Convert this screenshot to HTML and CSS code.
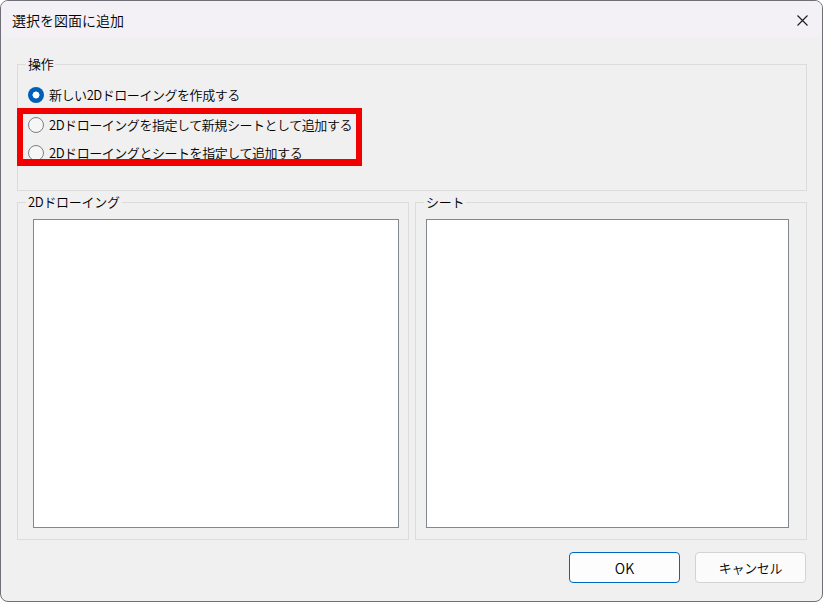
FILE: index.html
```html
<!DOCTYPE html>
<html lang="ja">
<head>
<meta charset="utf-8">
<title>選択を図面に追加</title>
<link rel="stylesheet" href="styles.css">
</head>
<body>
<div class="window">
  <div class="titlebar">
    <span class="title">選択を図面に追加</span>
    <span class="close">
      <svg width="11" height="11" viewBox="0 0 11 11"><path d="M0.5 0.5 L10.5 10.5 M10.5 0.5 L0.5 10.5" stroke="#1a1a1a" stroke-width="1.1" fill="none"/></svg>
    </span>
  </div>
  <div class="content">
    <div class="group group-op">
      <span class="group-label">操作</span>
      <div class="radio-row row1"><span class="radio checked"></span><span class="radio-text">新しい2Dドローイングを作成する</span></div>
      <div class="radio-row row2"><span class="radio"></span><span class="radio-text">2Dドローイングを指定して新規シートとして追加する</span></div>
      <div class="radio-row row3"><span class="radio"></span><span class="radio-text">2Dドローイングとシートを指定して追加する</span></div>
      <div class="highlight"></div>
    </div>
    <div class="lists">
      <div class="group group-left">
        <span class="group-label">2Dドローイング</span>
        <div class="listbox lb-left"></div>
      </div>
      <div class="group group-right">
        <span class="group-label">シート</span>
        <div class="listbox lb-right"></div>
      </div>
    </div>
    <div class="buttons">
      <button class="btn btn-ok">OK</button>
      <button class="btn btn-cancel">キャンセル</button>
    </div>
  </div>
</div>
</body>
</html>
```
FILE: styles.css
```css
* { box-sizing: border-box; }
html, body { margin: 0; padding: 0; background: #ffffff; }
body {
  font-family: "Noto Sans CJK JP", "Noto Sans", sans-serif;
  font-weight: 350;
  color: #000;
}
.window {
  width: 823px;
  height: 602px;
  border: 1px solid #6f6f77;
  border-radius: 8px;
  overflow: hidden;
  background: #f0f0f0;
  display: flex;
  flex-direction: column;
}
.titlebar {
  height: 36px;
  flex: none;
  background: #f3f1f6;
  display: flex;
  align-items: center;
  justify-content: space-between;
  padding-left: 11px;
  padding-right: 14px;
}
.title {
  font-size: 14px;
  line-height: 18px;
  margin-top: 2px;
}
.close { display: flex; margin-top: 2px; }
.content {
  padding: 27px 15px 0 16px;
}
.group {
  position: relative;
  border: 1px solid #dcdcdc;
}
.group-label {
  position: absolute;
  top: -9px;
  left: 8px;
  padding: 0 2px;
  background: #f0f0f0;
  font-size: 13px;
  line-height: 16px;
  letter-spacing: -0.3px;
}
.group-op {
  height: 127px;
  padding: 19px 0 0 10px;
}
.radio-row {
  display: flex;
  align-items: center;
  height: 22px;
}
.row1 { margin-bottom: 8px; }
.row2 { margin-bottom: 6px; }
.radio {
  width: 16px;
  height: 16px;
  border-radius: 50%;
  border: 1px solid #7f7f7f;
  background: #f6f6f6;
  flex: none;
  margin-right: 5px;
}
.radio.checked {
  border: none;
  background: radial-gradient(circle, #ffffff 0 3.2px, #005fb8 3.8px);
}
.radio-text {
  font-size: 13px;
  line-height: 18px;
  letter-spacing: -0.45px;
}
.highlight {
  position: absolute;
  left: -1px;
  top: 43px;
  width: 345px;
  height: 58px;
  border: 6px solid #f00000;
  border-bottom-width: 7px;
}
.lists {
  display: flex;
  gap: 6px;
  margin-top: 11px;
}
.group-left, .group-right {
  width: 392px;
  height: 338px;
  padding-top: 16px;
}
.group-left { padding-left: 15px; }
.group-right { padding-left: 10px; }
.listbox {
  height: 309px;
  background: #ffffff;
  border: 1px solid #828790;
}
.lb-left { width: 366px; }
.lb-right { width: 363px; }
.buttons {
  display: flex;
  justify-content: flex-end;
  gap: 15px;
  margin-top: 12px;
  padding-right: 1px;
}
.btn {
  width: 111px;
  height: 31px;
  border-radius: 4px;
  font-family: "Noto Sans CJK JP", "Noto Sans", sans-serif;
  font-weight: 350;
  font-size: 13px;
  color: #000;
  padding: 0;
}
.btn-ok {
  background: #fdfdfd;
  border: 1px solid #0067c0;
  font-size: 14px;
}
.btn-cancel {
  background: #fbfbfb;
  border: 1px solid #d3d3d3;
  letter-spacing: -0.3px;
}
```
